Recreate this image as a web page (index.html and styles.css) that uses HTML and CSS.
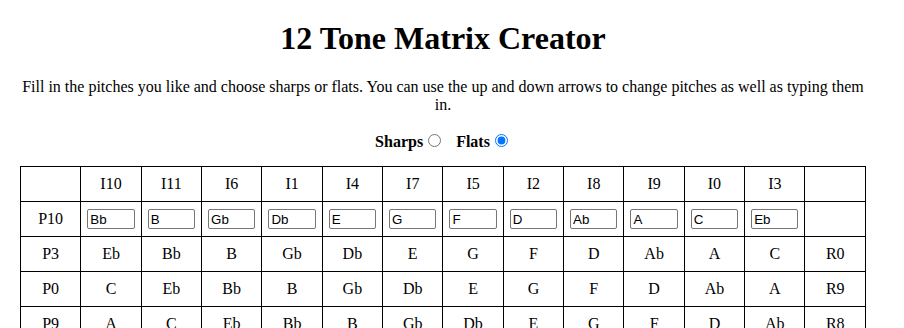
FILE: index.html
```html
<!DOCTYPE html>
<html lang="en">
<head>
  <meta charset="UTF-8">
  <title>12 Tone Matrix Creator</title>
  <link rel="stylesheet" href="styles.css">
</head>
<body>
  <div class="page">
    <h1 class="title">12 Tone Matrix Creator</h1>
    <p class="intro">Fill in the pitches you like and choose sharps or flats. You can use the up and down arrows to change pitches as well as typing them in.</p>

    <p class="accidentals">
      <label class="choice">Sharps<input type="radio" name="accidental" value="sharps"></label>
      <label class="choice">Flats<input type="radio" name="accidental" value="flats" checked></label>
    </p>

    <table class="matrix">
      <tr>
        <td></td>
        <td>I10</td><td>I11</td><td>I6</td><td>I1</td><td>I4</td><td>I7</td>
        <td>I5</td><td>I2</td><td>I8</td><td>I9</td><td>I0</td><td>I3</td>
        <td></td>
      </tr>
      <tr>
        <td>P10</td>
        <td><input class="pitch" type="text" value="Bb"></td>
        <td><input class="pitch" type="text" value="B"></td>
        <td><input class="pitch" type="text" value="Gb"></td>
        <td><input class="pitch" type="text" value="Db"></td>
        <td><input class="pitch" type="text" value="E"></td>
        <td><input class="pitch" type="text" value="G"></td>
        <td><input class="pitch" type="text" value="F"></td>
        <td><input class="pitch" type="text" value="D"></td>
        <td><input class="pitch" type="text" value="Ab"></td>
        <td><input class="pitch" type="text" value="A"></td>
        <td><input class="pitch" type="text" value="C"></td>
        <td><input class="pitch" type="text" value="Eb"></td>
        <td></td>
      </tr>
      <tr><td>P3</td><td>Eb</td><td>Bb</td><td>B</td><td>Gb</td><td>Db</td><td>E</td><td>G</td><td>F</td><td>D</td><td>Ab</td><td>A</td><td>C</td><td>R0</td></tr>
      <tr><td>P0</td><td>C</td><td>Eb</td><td>Bb</td><td>B</td><td>Gb</td><td>Db</td><td>E</td><td>G</td><td>F</td><td>D</td><td>Ab</td><td>A</td><td>R9</td></tr>
      <tr><td>P9</td><td>A</td><td>C</td><td>Eb</td><td>Bb</td><td>B</td><td>Gb</td><td>Db</td><td>E</td><td>G</td><td>F</td><td>D</td><td>Ab</td><td>R8</td></tr>
      <tr><td>P8</td><td>Ab</td><td>A</td><td>C</td><td>Eb</td><td>Bb</td><td>B</td><td>Gb</td><td>Db</td><td>E</td><td>G</td><td>F</td><td>D</td><td>R2</td></tr>
      <tr><td>P2</td><td>D</td><td>Ab</td><td>A</td><td>C</td><td>Eb</td><td>Bb</td><td>B</td><td>Gb</td><td>Db</td><td>E</td><td>G</td><td>F</td><td>R5</td></tr>
      <tr><td>P5</td><td>F</td><td>D</td><td>Ab</td><td>A</td><td>C</td><td>Eb</td><td>Bb</td><td>B</td><td>Gb</td><td>Db</td><td>E</td><td>G</td><td>R7</td></tr>
      <tr><td>P7</td><td>G</td><td>F</td><td>D</td><td>Ab</td><td>A</td><td>C</td><td>Eb</td><td>Bb</td><td>B</td><td>Gb</td><td>Db</td><td>E</td><td>R4</td></tr>
      <tr><td>P4</td><td>E</td><td>G</td><td>F</td><td>D</td><td>Ab</td><td>A</td><td>C</td><td>Eb</td><td>Bb</td><td>B</td><td>Gb</td><td>Db</td><td>R1</td></tr>
      <tr><td>P1</td><td>Db</td><td>E</td><td>G</td><td>F</td><td>D</td><td>Ab</td><td>A</td><td>C</td><td>Eb</td><td>Bb</td><td>B</td><td>Gb</td><td>R6</td></tr>
      <tr><td>P6</td><td>Gb</td><td>Db</td><td>E</td><td>G</td><td>F</td><td>D</td><td>Ab</td><td>A</td><td>C</td><td>Eb</td><td>Bb</td><td>B</td><td>R11</td></tr>
      <tr><td>P11</td><td>B</td><td>Gb</td><td>Db</td><td>E</td><td>G</td><td>F</td><td>D</td><td>Ab</td><td>A</td><td>C</td><td>Eb</td><td>Bb</td><td>R10</td></tr>
    </table>
  </div>
</body>
</html>
```

FILE: styles.css
```css
body {
  margin: 8px;
  font-family: "Liberation Serif", "Times New Roman", serif;
  font-size: 16px;
  color: black;
  background: white;
}

.page {
  width: 846px;
  margin-left: 12px;
}

.title {
  font-size: 32px;
  font-weight: bold;
  text-align: center;
  margin: 12px 0 21px;
}

.intro {
  text-align: center;
  margin: 16px 0;
}

.accidentals {
  text-align: center;
  font-weight: bold;
  margin: 17px 0 15px;
}

.choice {
  margin: 0 4px;
}

.choice input {
  margin: 3px 3px 0 5px;
}

.matrix {
  width: 100%;
  border-collapse: collapse;
  table-layout: fixed;
}

.matrix td {
  border: 1px solid black;
  height: 34px;
  padding: 0 6px;
  text-align: center;
  vertical-align: middle;
}

.pitch {
  width: 100%;
  height: 20px;
  box-sizing: border-box;
  padding: 1px 2px;
  border: 1px solid #767676;
  border-radius: 2px;
  font-family: "Liberation Sans", Arial, sans-serif;
  font-size: 13.33px;
}
```
